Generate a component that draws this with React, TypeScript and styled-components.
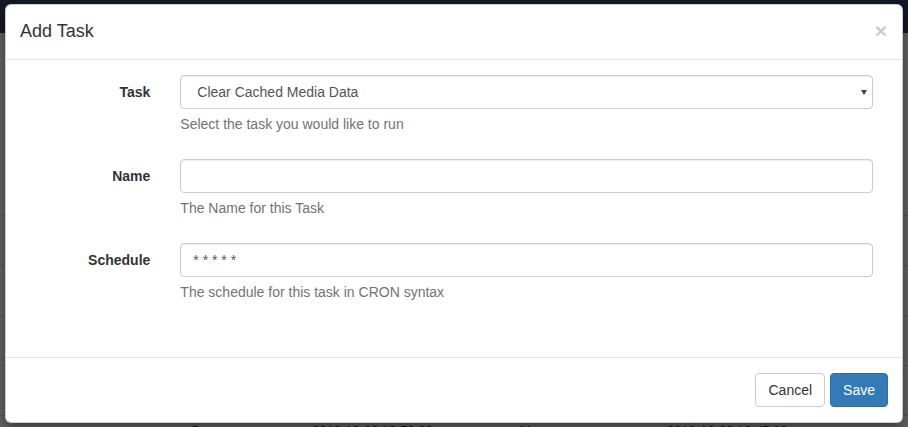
import React from "react";
import styled, { createGlobalStyle } from "styled-components";

const Global = createGlobalStyle`
  html, body { margin: 0; padding: 0; }
  body {
    font-family: "Liberation Sans", Arial, Helvetica, sans-serif;
    font-size: 14px;
    line-height: 1.42857143;
    color: #333;
    background: #fff;
    overflow: hidden;
  }
  * { box-sizing: border-box; }
`;

const Page = styled.div`
  width: 908px;
  height: 427px;
  position: relative;
  overflow: hidden;
  background: #fff;
`;

const Navbar = styled.div`
  height: 33px;
  background: #34415f;
`;

const PageContent = styled.div`
  padding: 182px 0 0 0;
  display: flex;
  flex-direction: column;
`;

const BgRow = styled.div`
  height: 50px;
  border-top: 1px solid #ddd;
  display: grid;
  grid-template-columns: 69px 113px 122px 208px 147px 213px 36px;
  align-items: start;
  padding-top: 6px;
  font-size: 13px;
  color: #333;
`;

const BgCell = styled.div`
  white-space: nowrap;
  padding-left: 8px;
`;

const Backdrop = styled.div`
  position: absolute;
  inset: 0;
  background: rgba(0, 0, 0, 0.6);
`;

const Overlay = styled.div`
  position: absolute;
  inset: 0;
  padding: 4px 5px;
  display: flex;
  flex-direction: column;
`;

const Modal = styled.div`
  background: #fff;
  border: 1px solid rgba(0, 0, 0, 0.2);
  border-radius: 6px;
  box-shadow: 0 5px 15px rgba(0, 0, 0, 0.5);
  display: flex;
  flex-direction: column;
`;

const Header = styled.div`
  padding: 14px 15px 14px 14px;
  border-bottom: 1px solid #e5e5e5;
  display: flex;
  align-items: flex-start;
  justify-content: space-between;
`;

const Title = styled.h4`
  margin: 0;
  font-size: 18px;
  font-weight: 500;
  line-height: 1.42857143;
  color: #333;
`;

const Close = styled.button`
  border: 0;
  background: transparent;
  padding: 0;
  margin-top: 1px;
  font-family: "Liberation Sans", Arial, sans-serif;
  font-size: 21px;
  font-weight: bold;
  line-height: 1;
  color: #000;
  opacity: 0.2;
  cursor: pointer;
`;

const Body = styled.div`
  padding: 15px 15px 45px 15px;
  display: flex;
  flex-direction: column;
  gap: 15px;
`;

const FormGroup = styled.div`
  display: flex;
`;

const Label = styled.label`
  width: 16.6667%;
  flex: none;
  padding: 7px 15px 0 15px;
  text-align: right;
  font-weight: bold;
  color: #333;
`;

const ControlCol = styled.div`
  flex: 1;
  padding: 0 14px 0 15px;
  display: flex;
  flex-direction: column;
`;

const SelectWrap = styled.div`
  position: relative;
`;

const Select = styled.select`
  display: block;
  width: 100%;
  height: 34px;
  padding: 6px 24px 6px 16px;
  font-family: "Liberation Sans", Arial, sans-serif;
  font-size: 14px;
  color: #555;
  background: #fff;
  border: 1px solid #ccc;
  border-radius: 4px;
  box-shadow: inset 0 1px 1px rgba(0, 0, 0, 0.075);
  appearance: none;
  -webkit-appearance: none;
  outline: none;
`;

const Caret = styled.span`
  position: absolute;
  right: 6px;
  top: 15px;
  width: 0;
  height: 0;
  border-left: 3.5px solid transparent;
  border-right: 3.5px solid transparent;
  border-top: 5px solid #444;
  pointer-events: none;
`;

const Input = styled.input`
  display: block;
  width: 100%;
  height: 34px;
  padding: 6px 12px;
  font-family: "Liberation Sans", Arial, sans-serif;
  font-size: 14px;
  color: #555;
  background: #fff;
  border: 1px solid #ccc;
  border-radius: 4px;
  box-shadow: inset 0 1px 1px rgba(0, 0, 0, 0.075);
  outline: none;
`;

const Help = styled.span`
  display: block;
  margin: 5px 0 10px 0;
  color: #737373;
`;

const Footer = styled.div`
  padding: 15px 14px 15px 15px;
  border-top: 1px solid #e5e5e5;
  display: flex;
  justify-content: flex-end;
  gap: 5px;
`;

const Button = styled.button<{ $primary?: boolean }>`
  height: 34px;
  padding: 6px 12px;
  font-family: "Liberation Sans", Arial, sans-serif;
  font-size: 14px;
  line-height: 1.42857143;
  border-radius: 4px;
  border: 1px solid ${(p) => (p.$primary ? "#2e6da4" : "#ccc")};
  background: ${(p) => (p.$primary ? "#337ab7" : "#fff")};
  color: ${(p) => (p.$primary ? "#fff" : "#333")};
  cursor: pointer;
`;

const bgRows = [
  ["", "", "", "", "", "", ""],
  ["", "", "", "", "", "", ""],
  ["", "", "", "", "", "", ""],
  ["", "", "", "", "", "", ""],
  ["", "▲", "O", "2019-10-30 19:50:00", "M", "2019-10-30 19:45:00", "▲"],
];

export default function App() {
  return (
    <>
      <Global />
      <Page>
        <Navbar />
        <PageContent>
          {bgRows.map((r, i) => (
            <BgRow key={i}>
              {r.map((c, j) => (
                <BgCell key={j}>{c}</BgCell>
              ))}
            </BgRow>
          ))}
        </PageContent>
        <Backdrop />
        <Overlay>
          <Modal>
            <Header>
              <Title>Add Task</Title>
              <Close aria-label="Close">×</Close>
            </Header>
            <Body>
              <FormGroup>
                <Label>Task</Label>
                <ControlCol>
                  <SelectWrap>
                    <Select defaultValue="clear">
                      <option value="clear">Clear Cached Media Data</option>
                    </Select>
                    <Caret />
                  </SelectWrap>
                  <Help>Select the task you would like to run</Help>
                </ControlCol>
              </FormGroup>
              <FormGroup>
                <Label>Name</Label>
                <ControlCol>
                  <Input type="text" defaultValue="" />
                  <Help>The Name for this Task</Help>
                </ControlCol>
              </FormGroup>
              <FormGroup>
                <Label>Schedule</Label>
                <ControlCol>
                  <Input type="text" defaultValue="* * * * *" />
                  <Help>The schedule for this task in CRON syntax</Help>
                </ControlCol>
              </FormGroup>
            </Body>
            <Footer>
              <Button>Cancel</Button>
              <Button $primary>Save</Button>
            </Footer>
          </Modal>
        </Overlay>
      </Page>
    </>
  );
}
